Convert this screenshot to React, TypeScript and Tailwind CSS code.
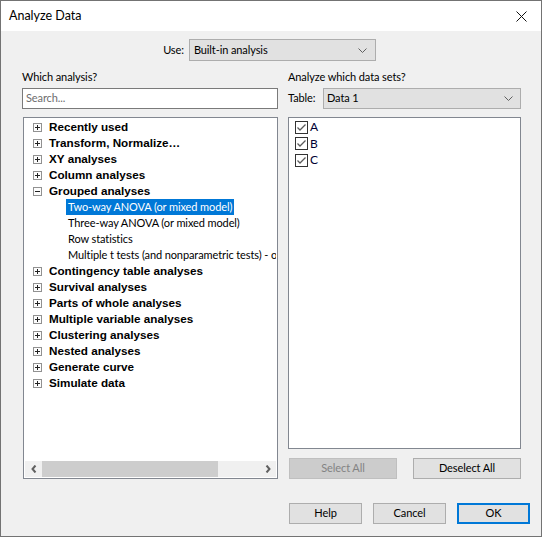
import React from "react";

function PlusBox({ minus }: { minus?: boolean }) {
  return (
    <svg width="9" height="9" viewBox="0 0 9 9" className="shrink-0">
      <rect x="0.5" y="0.5" width="8" height="8" fill="#fcfcfc" stroke="#919191" />
      <path d="M2 4.5H7" stroke="#222" />
      {!minus && <path d="M4.5 2V7" stroke="#222" />}
    </svg>
  );
}

function Check() {
  return (
    <svg width="13" height="13" viewBox="0 0 13 13" className="shrink-0">
      <rect x="0.5" y="0.5" width="12" height="12" fill="#fff" stroke="#333" />
      <path d="M2.5 6.5L5 9L10.5 3.5" stroke="#5a5a5a" strokeWidth="1.3" fill="none" />
    </svg>
  );
}

function Chevron() {
  return (
    <svg width="9" height="5" viewBox="0 0 9 5" className="shrink-0">
      <path d="M0.5 0.5L4.5 4.5L8.5 0.5" stroke="#606060" fill="none" />
    </svg>
  );
}

const cats = [
  "Recently used",
  "Transform, Normalize…",
  "XY analyses",
  "Column analyses",
  "Grouped analyses",
  "Contingency table analyses",
  "Survival analyses",
  "Parts of whole analyses",
  "Multiple variable analyses",
  "Clustering analyses",
  "Nested analyses",
  "Generate curve",
  "Simulate data",
];

const children = [
  "Two-way ANOVA (or mixed model)",
  "Three-way ANOVA (or mixed model)",
  "Row statistics",
  "Multiple t tests (and nonparametric tests) - one per row",
];

export default function App() {
  return (
    <div className="w-[542px] h-[537px] border border-[#737373] flex flex-col bg-[#f0f0f0] text-black font-['Lato',sans-serif] text-[11px] tracking-[-0.1px] overflow-hidden">
      {/* Title bar */}
      <div className="h-[30px] bg-white flex items-center justify-between pl-2 pr-[14px] shrink-0">
        <span className="text-[12.5px] tracking-normal text-black">Analyze Data</span>
        <svg width="11" height="11" viewBox="0 0 11 11">
          <path d="M0.5 0.5L10.5 10.5M10.5 0.5L0.5 10.5" stroke="#111" strokeWidth="1" />
        </svg>
      </div>

      {/* Body */}
      <div className="flex-1 flex flex-col">
        {/* Use row */}
        <div className="mt-[8px] h-[22px] flex justify-center items-center gap-[5px] pr-[3px]">
          <span>Use:</span>
          <div className="w-[187px] h-[22px] bg-[#e1e1e1] border border-[#adadad] flex items-center justify-between pl-[4px] pr-[8px]">
            <span>Built-in analysis</span>
            <Chevron />
          </div>
        </div>

        {/* Columns */}
        <div className="mt-[8px] pl-[21px] flex gap-[10px]">
          {/* Left */}
          <div className="w-[256px] flex flex-col">
            <div className="h-[16px] leading-[16px]">Which analysis?</div>
            <div className="mt-[3px] h-[21px] bg-white border border-[#7a7a7a] flex items-center pl-[3px] text-[#6d6d6d]">
              Search...
            </div>
            <div className="mt-[8px] ml-[1px] w-[255px] h-[362px] bg-white border border-[#828790] p-[1px] flex flex-col">
              <div className="flex-1 overflow-hidden">
                {cats.map((c) => (
                  <React.Fragment key={c}>
                    <div className="h-[16px] flex items-center pl-[8px] gap-[7px] whitespace-nowrap">
                      <PlusBox minus={c === "Grouped analyses"} />
                      <span className="font-['Liberation_Sans',sans-serif] font-bold text-[11.7px] tracking-normal leading-[16px]">
                        {c}
                      </span>
                    </div>
                    {c === "Grouped analyses" &&
                      children.map((ch, i) => (
                        <div key={ch} className="h-[16px] flex items-center pl-[41px] whitespace-nowrap">
                          <span
                            className={
                              i === 0
                                ? "bg-[#0078d7] text-white px-[2px] leading-[16px]"
                                : "px-[2px] leading-[16px]"
                            }
                          >
                            {ch}
                          </span>
                        </div>
                      ))}
                  </React.Fragment>
                ))}
              </div>
              {/* horizontal scrollbar */}
              <div className="h-[16px] bg-[#f0f0f0] flex items-center">
                <div className="w-[17px] h-[16px] flex items-center justify-center">
                  <svg width="6" height="8" viewBox="0 0 6 8">
                    <path d="M4.5 0.5L1.5 4L4.5 7.5" stroke="#606060" strokeWidth="2" fill="none" />
                  </svg>
                </div>
                <div className="w-[176px] h-[16px] bg-[#cdcdcd]" />
                <div className="flex-1" />
                <div className="w-[17px] h-[16px] flex items-center justify-center">
                  <svg width="6" height="8" viewBox="0 0 6 8">
                    <path d="M1.5 0.5L4.5 4L1.5 7.5" stroke="#606060" strokeWidth="2" fill="none" />
                  </svg>
                </div>
              </div>
            </div>
          </div>

          {/* Right */}
          <div className="w-[233px] flex flex-col">
            <div className="h-[16px] leading-[16px]">Analyze which data sets?</div>
            <div className="mt-[3px] h-[21px] flex items-center">
              <span className="w-[35px]">Table:</span>
              <div className="w-[198px] h-[21px] bg-[#e1e1e1] border border-[#adadad] flex items-center justify-between pl-[3px] pr-[7px]">
                <span>Data 1</span>
                <Chevron />
              </div>
            </div>
            <div className="mt-[8px] h-[332px] bg-white border border-[#828790] pt-[1px] pl-[6px] flex flex-col">
              {["A", "B", "C"].map((l) => (
                <div key={l} className="h-[16.5px] flex items-center gap-[2px]">
                  <Check />
                  <span className="text-[12px] text-[#000033]">{l}</span>
                </div>
              ))}
            </div>
            <div className="mt-[9px] h-[21px] flex justify-between pl-[1px]">
              <div className="w-[108px] h-[21px] bg-[#cccccc] border border-[#bfbfbf] text-[#838383] flex items-center justify-center">
                Select All
              </div>
              <div className="w-[108px] h-[21px] bg-[#e1e1e1] border border-[#adadad] flex items-center justify-center">
                Deselect All
              </div>
            </div>
          </div>
        </div>

        {/* Bottom buttons */}
        <div className="mt-[24px] flex justify-end gap-[11px] pr-[11px]">
          <div className="w-[73px] h-[21px] bg-[#e1e1e1] border border-[#adadad] flex items-center justify-center">
            Help
          </div>
          <div className="w-[73px] h-[21px] bg-[#e1e1e1] border border-[#adadad] flex items-center justify-center">
            Cancel
          </div>
          <div className="w-[73px] h-[21px] bg-[#e1e1e1] border-2 border-[#0078d7] flex items-center justify-center">
            OK
          </div>
        </div>
      </div>
    </div>
  );
}
